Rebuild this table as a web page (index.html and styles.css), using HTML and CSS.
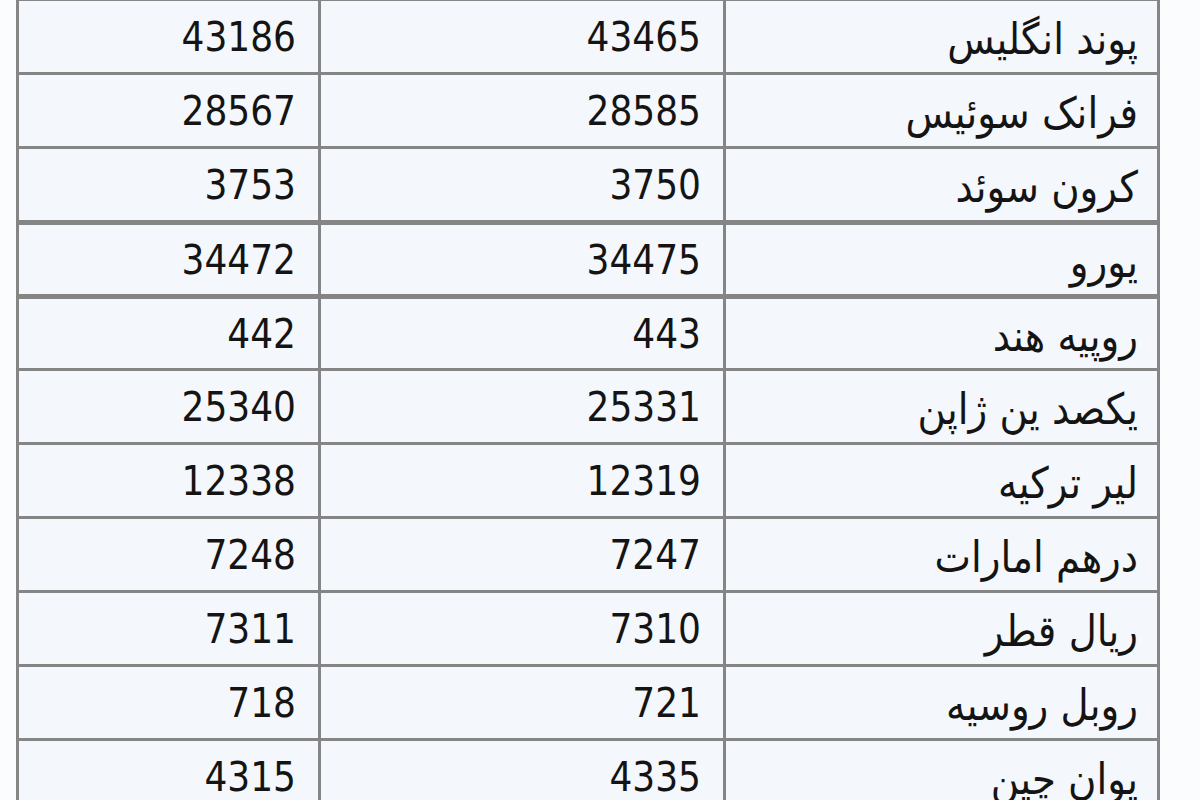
FILE: index.html
```html
<!DOCTYPE html>
<html lang="fa" dir="rtl">
<head>
<meta charset="utf-8">
<link rel="stylesheet" href="styles.css">
</head>
<body>
<table class="rates">
<colgroup><col class="c-name"><col class="c-mid"><col class="c-left"></colgroup>
<tbody>
<tr><td class="name">پوند انگلیس</td><td>43465</td><td>43186</td></tr>
<tr><td class="name">فرانک سوئیس</td><td>28585</td><td>28567</td></tr>
<tr><td class="name">کرون سوئد</td><td>3750</td><td>3753</td></tr>
<tr class="thick"><td class="name">یورو</td><td>34475</td><td>34472</td></tr>
<tr class="thick"><td class="name">روپیه هند</td><td>443</td><td>442</td></tr>
<tr><td class="name">یکصد ین ژاپن</td><td>25331</td><td>25340</td></tr>
<tr><td class="name">لیر ترکیه</td><td>12319</td><td>12338</td></tr>
<tr><td class="name">درهم امارات</td><td>7247</td><td>7248</td></tr>
<tr><td class="name">ریال قطر</td><td>7310</td><td>7311</td></tr>
<tr><td class="name">روبل روسیه</td><td>721</td><td>718</td></tr>
<tr><td class="name">یوان چین</td><td>4335</td><td>4315</td></tr>
</tbody>
</table>
</body>
</html>
```

FILE: styles.css
```css
html, body {
  margin: 0;
  padding: 0;
  background: #fbfcfd;
}
body {
  overflow: hidden;
  height: 800px;
}
.rates {
  direction: rtl;
  border-collapse: collapse;
  table-layout: fixed;
  width: 1141px;
  margin-right: 40px;
  margin-left: auto;
  margin-top: -2px;
  font-family: "DejaVu Sans Condensed", "DejaVu Sans", sans-serif;
  font-stretch: condensed;
  font-size: 40px;
  color: #141414;
  background: #f4f7fb;
}
.c-name { width: 434px; }
.c-mid { width: 405px; }
.c-left { width: 302px; }
.rates td {
  border: 3px solid #858585;
  height: 71px;
  padding: 0 22px 0 22px;
  text-align: right;
  vertical-align: middle;
  line-height: 1;
  white-space: nowrap;
}
.rates td.name {
  font-size: 43px;
  height: 65px;
  padding-right: 19px;
  padding-top: 6px;
  padding-bottom: 0;
}
.rates tr.thick td {
  border-top-width: 5px;
  height: 69px;
}
.rates tr.thick td.name {
  height: 63px;
}
```
